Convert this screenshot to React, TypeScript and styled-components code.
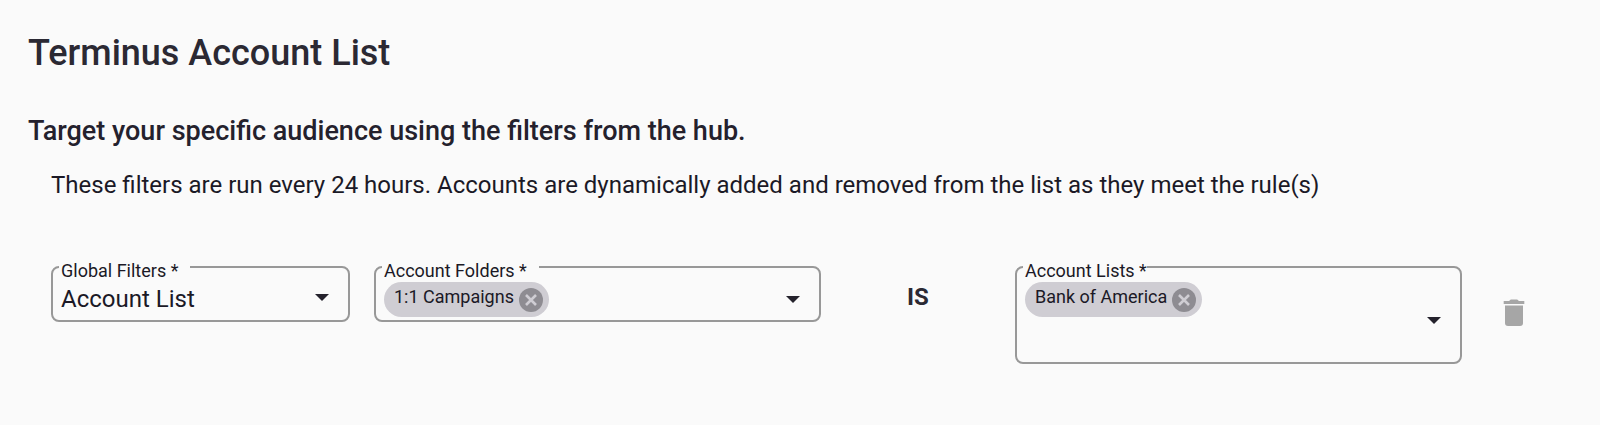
import React, { useState } from 'react';
import styled, { createGlobalStyle } from 'styled-components';

const GlobalStyle = createGlobalStyle`
  *, *::before, *::after { box-sizing: border-box; }
  body {
    margin: 0;
    background: #fafafa;
    color: #1b1926;
    font-family: Roboto, "Liberation Sans", sans-serif;
  }
  button, input, select { font: inherit; color: inherit; }
`;

const Page = styled.main`
  padding: 32px 28px 60px;
`;

const Title = styled.h1`
  margin: 0;
  font-size: 36px;
  line-height: 42px;
  font-weight: 500;
  color: #2b2933;
`;

const Subtitle = styled.h2`
  margin: 41px 0 0;
  font-size: 27px;
  line-height: 32px;
  font-weight: 500;
  color: #24212d;
`;

const Body = styled.section`
  padding-left: 23px;
`;

const Description = styled.p`
  margin: 22px 0 65px;
  font-size: 24px;
  line-height: 32px;
`;

const FilterRow = styled.form`
  display: grid;
  grid-template-columns: minmax(0, 299fr) minmax(0, 447fr) 146px minmax(0, 447fr) 86px;
  column-gap: 24px;
  align-items: start;
`;

const Field = styled.div`
  position: relative;
  display: flex;
  padding: 14px 19px 3px 8px;
  border: 2px solid #989898;
  border-radius: 8px;
`;

const FieldLabel = styled.label<{ $notch?: boolean }>`
  position: absolute;
  top: -7px;
  left: 6px;
  padding: 0 ${p => (p.$notch ? 12 : 0)}px 0 2px;
  background: #fafafa;
  font-size: 18px;
  line-height: 20px;
  white-space: nowrap;
`;

const Select = styled.select`
  appearance: none;
  flex: 1;
  min-width: 0;
  height: 35px;
  margin: 0;
  padding: 0;
  border: 0;
  outline: 0;
  background: transparent;
  font-size: 24px;
  line-height: 35px;
`;

const SelectCaret = styled.span`
  display: flex;
  align-items: center;
  height: 30px;
  pointer-events: none;
`;

const CaretButton = styled.button`
  display: flex;
  align-items: center;
  margin: 0;
  padding: 0;
  border: 0;
  background: transparent;
  cursor: pointer;
`;

const Values = styled.div<{ $stacked?: boolean }>`
  flex: 1;
  min-width: 0;
  display: flex;
  flex-direction: ${p => (p.$stacked ? 'column' : 'row')};
  align-items: flex-start;
`;

const Chip = styled.span`
  display: flex;
  align-items: center;
  gap: 5px;
  height: 35px;
  padding: 0 6px 0 10px;
  border-radius: 18px;
  background: #cfcdd3;
  white-space: nowrap;
`;

const ChipText = styled.span`
  padding-bottom: 6px;
  font-size: 18px;
  line-height: 20px;
`;

const ChipRemove = styled.button`
  display: flex;
  width: 24px;
  height: 24px;
  padding: 0;
  border: 0;
  border-radius: 50%;
  background: #8e8c92;
  color: #cfcdd3;
  cursor: pointer;
`;

const ChipInput = styled.input<{ $stacked?: boolean }>`
  ${p => (p.$stacked ? 'width: 100%;' : 'flex: 1;')}
  min-width: 0;
  height: ${p => (p.$stacked ? 42 : 35)}px;
  padding: 0 8px;
  border: 0;
  outline: 0;
  background: transparent;
  font-size: 18px;
`;

const Operator = styled.strong`
  font-size: 24px;
  line-height: 62px;
  font-weight: 700;
  text-align: center;
  color: #2b2933;
`;

const DeleteButton = styled.button`
  display: flex;
  margin: 19px 0 0;
  padding: 10px;
  justify-self: start;
  border: 0;
  border-radius: 50%;
  background: transparent;
  color: #a6a6a6;
  cursor: pointer;
`;

const Caret = () => (
  <svg width="14" height="7" viewBox="0 0 14 7" aria-hidden="true">
    <path d="M0 0h14L7 7z" fill="#24222c" />
  </svg>
);

const Cross = () => (
  <svg width="24" height="24" viewBox="0 0 24 24" aria-hidden="true">
    <path d="M7 7l10 10M17 7L7 17" stroke="currentColor" strokeWidth="2.6" />
  </svg>
);

const Trash = () => (
  <svg width="36" height="36" viewBox="0 0 36 36" fill="currentColor" aria-hidden="true">
    <path d="M7.7 6H13l1.8-1.5h6.4L23 6h5.3v3H7.7z" />
    <path d="M9 10.4h18V28a3 3 0 0 1-3 3H12a3 3 0 0 1-3-3z" />
  </svg>
);

type ChipFieldProps = {
  id: string;
  label: string;
  initial: string[];
  notch?: boolean;
  stacked?: boolean;
};

function ChipField({ id, label, initial, notch, stacked }: ChipFieldProps) {
  const [chips, setChips] = useState(initial);
  return (
    <Field>
      <FieldLabel htmlFor={id} $notch={notch}>{label} *</FieldLabel>
      <Values $stacked={stacked}>
        {chips.map(chip => (
          <Chip key={chip}>
            <ChipText>{chip}</ChipText>
            <ChipRemove
              type="button"
              aria-label={`Remove ${chip}`}
              onClick={() => setChips(chips.filter(c => c !== chip))}
            >
              <Cross />
            </ChipRemove>
          </Chip>
        ))}
        <ChipInput id={id} type="text" autoComplete="off" $stacked={stacked} />
      </Values>
      <CaretButton type="button" aria-label={`Open ${label}`}>
        <Caret />
      </CaretButton>
    </Field>
  );
}

export default function App() {
  return (
    <>
      <GlobalStyle />
      <Page>
        <Title>Terminus Account List</Title>
        <Subtitle>Target your specific audience using the filters from the hub.</Subtitle>
        <Body>
          <Description>
            These filters are run every 24 hours. Accounts are dynamically added and removed from
            the list as they meet the rule(s)
          </Description>
          <FilterRow onSubmit={e => e.preventDefault()}>
            <Field>
              <FieldLabel htmlFor="global-filters" $notch>Global Filters *</FieldLabel>
              <Select id="global-filters" defaultValue="account-list">
                <option value="account-list">Account List</option>
              </Select>
              <SelectCaret>
                <Caret />
              </SelectCaret>
            </Field>
            <ChipField id="account-folders" label="Account Folders" initial={['1:1 Campaigns']} notch />
            <Operator>IS</Operator>
            <ChipField id="account-lists" label="Account Lists" initial={['Bank of America']} stacked />
            <DeleteButton type="button" aria-label="Delete filter">
              <Trash />
            </DeleteButton>
          </FilterRow>
        </Body>
      </Page>
    </>
  );
}
